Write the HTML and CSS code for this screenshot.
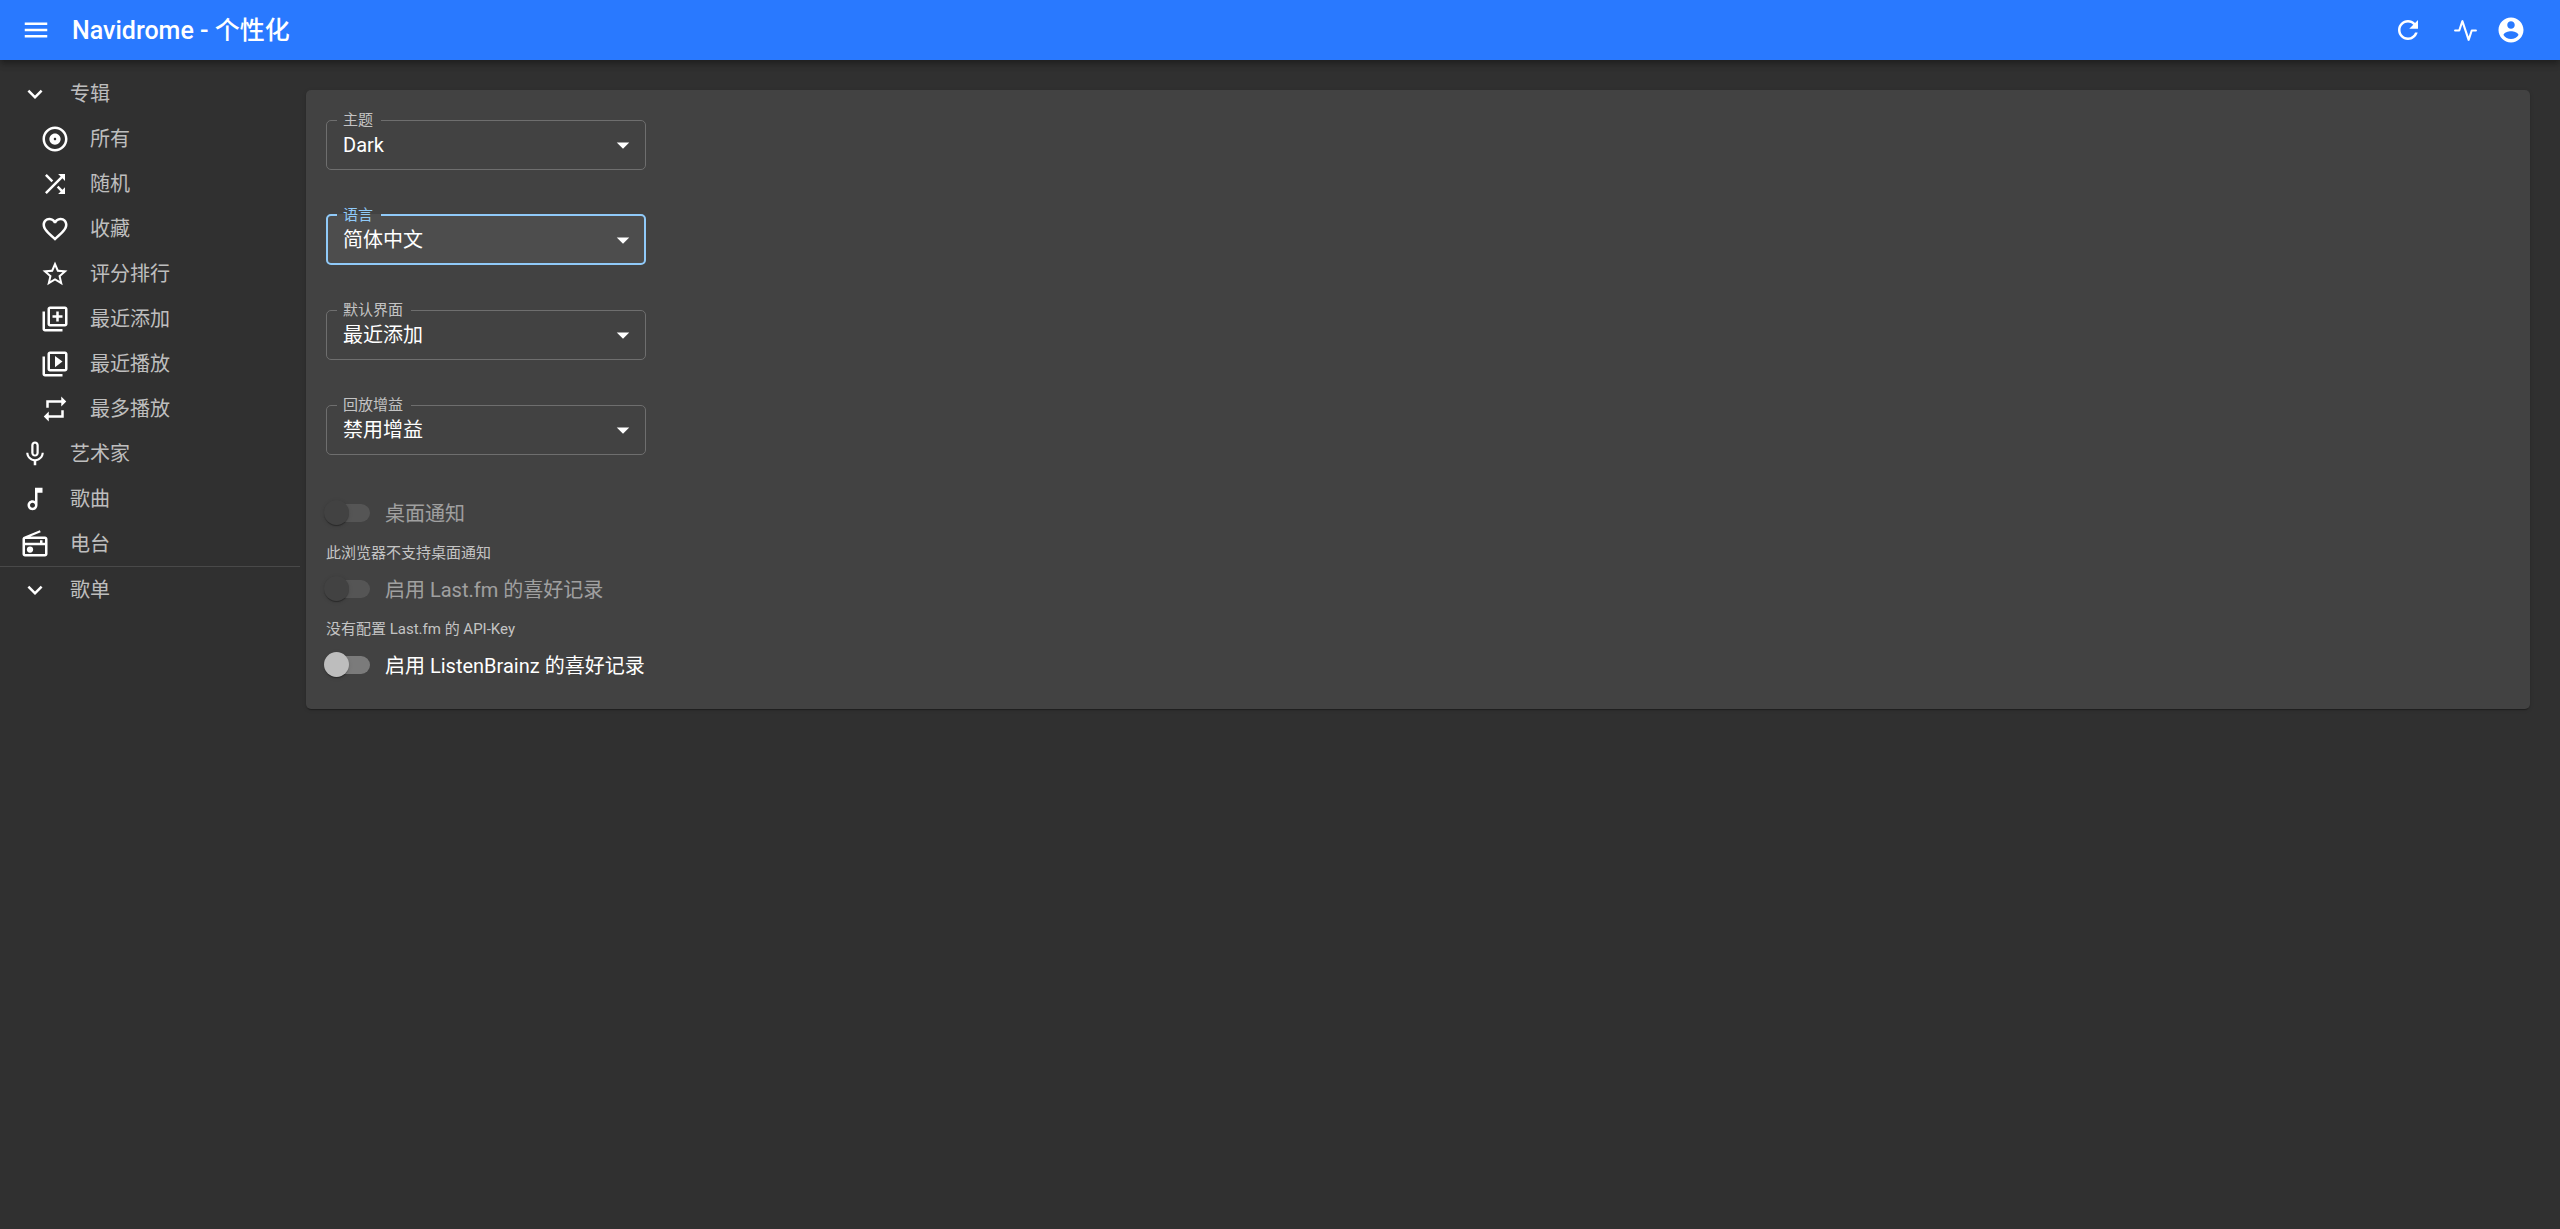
FILE: index.html
```html
<!DOCTYPE html>
<html lang="zh-CN">
<head>
<meta charset="utf-8">
<meta name="viewport" content="width=device-width, initial-scale=1">
<title>Navidrome - 个性化</title>
<link rel="stylesheet" href="styles.css">
</head>
<body>
<header class="appbar">
  <button class="icon-button" type="button" aria-label="菜单"><svg class="icon" viewBox="0 0 24 24"><path d="M3 18h18v-2H3v2zm0-5h18v-2H3v2zm0-7v2h18V6H3z"/></svg></button>
  <h1 class="title">Navidrome - 个性化</h1>
  <div class="actions">
    <button class="icon-button refresh" type="button" aria-label="刷新"><svg class="icon" viewBox="0 0 24 24"><path d="M17.65 6.35C16.2 4.9 14.21 4 12 4c-4.42 0-7.99 3.58-7.99 8s3.57 8 7.99 8c3.73 0 6.84-2.55 7.73-6h-2.08c-.82 2.33-3.04 4-5.65 4-3.31 0-6-2.69-6-6s2.69-6 6-6c1.66 0 3.14.69 4.22 1.78L13 11h7V4l-2.35 2.35z"/></svg></button>
    <button class="icon-button" type="button" aria-label="活动"><svg class="icon pulse" viewBox="0 0 24 24"><polyline points="22 12 18 12 15 21 9 3 6 12 2 12"/></svg></button>
    <button class="icon-button" type="button" aria-label="账户"><svg class="icon" viewBox="0 0 24 24"><path d="M12 2C6.48 2 2 6.48 2 12s4.48 10 10 10 10-4.48 10-10S17.52 2 12 2zm0 3c1.66 0 3 1.34 3 3s-1.34 3-3 3-3-1.34-3-3 1.34-3 3-3zm0 14.2c-2.5 0-4.71-1.28-6-3.22.03-1.99 4-3.08 6-3.08 1.99 0 5.97 1.09 6 3.08-1.29 1.94-3.5 3.22-6 3.22z"/></svg></button>
  </div>
</header>
<div class="layout">
  <nav class="sidebar">
    <button class="menu-item" type="button"><svg class="icon" viewBox="0 0 24 24"><path d="M7.41 8.59 12 13.17l4.59-4.58L18 10l-6 6-6-6 1.41-1.41z"/></svg>专辑</button>
    <a class="menu-item nested" href="#all"><svg class="icon" viewBox="0 0 24 24"><path d="M12 2C6.48 2 2 6.48 2 12s4.48 10 10 10 10-4.48 10-10S17.52 2 12 2zm0 18c-4.41 0-8-3.59-8-8s3.59-8 8-8 8 3.59 8 8-3.59 8-8 8zm0-12.5c-2.49 0-4.5 2.01-4.5 4.5s2.01 4.5 4.5 4.5 4.5-2.01 4.5-4.5-2.01-4.5-4.5-4.5zm0 5.5c-.55 0-1-.45-1-1s.45-1 1-1 1 .45 1 1-.45 1-1 1z"/></svg>所有</a>
    <a class="menu-item nested" href="#random"><svg class="icon" viewBox="0 0 24 24"><path d="M10.59 9.17 5.41 4 4 5.41l5.17 5.17 1.42-1.41zM14.5 4l2.04 2.04L4 18.59 5.41 20 17.96 7.46 20 9.5V4h-5.5zm.33 9.41-1.41 1.41 3.13 3.13L14.5 20H20v-5.5l-2.04 2.04-3.13-3.13z"/></svg>随机</a>
    <a class="menu-item nested" href="#starred"><svg class="icon" viewBox="0 0 24 24"><path d="M16.5 3c-1.74 0-3.41.81-4.5 2.09C10.91 3.81 9.24 3 7.5 3 4.42 3 2 5.42 2 8.5c0 3.78 3.4 6.86 8.55 11.54L12 21.35l1.45-1.32C18.6 15.36 22 12.28 22 8.5 22 5.42 19.58 3 16.5 3zm-4.4 15.55-.1.1-.1-.1C7.14 14.24 4 11.39 4 8.5 4 6.5 5.5 5 7.5 5c1.54 0 3.04.99 3.57 2.36h1.87C13.46 5.99 14.96 5 16.5 5c2 0 3.5 1.5 3.5 3.5 0 2.89-3.14 5.74-7.9 10.05z"/></svg>收藏</a>
    <a class="menu-item nested" href="#top-rated"><svg class="icon" viewBox="0 0 24 24"><path d="m22 9.24-7.19-.62L12 2 9.19 8.63 2 9.24l5.46 4.73L5.82 21 12 17.27 18.18 21l-1.63-7.03L22 9.24zM12 15.4l-3.76 2.27 1-4.28-3.32-2.88 4.38-.38L12 6.1l1.71 4.04 4.38.38-3.32 2.88 1 4.28L12 15.4z"/></svg>评分排行</a>
    <a class="menu-item nested" href="#recently-added"><svg class="icon" viewBox="0 0 24 24"><path d="M4 6H2v14c0 1.1.9 2 2 2h14v-2H4V6zm16-4H8c-1.1 0-2 .9-2 2v12c0 1.1.9 2 2 2h12c1.1 0 2-.9 2-2V4c0-1.1-.9-2-2-2zm0 14H8V4h12v12zm-7-2h2v-3h3V9h-3V6h-2v3h-3v2h3z"/></svg>最近添加</a>
    <a class="menu-item nested" href="#recently-played"><svg class="icon" viewBox="0 0 24 24"><path d="M4 6H2v14c0 1.1.9 2 2 2h14v-2H4V6zm16-4H8c-1.1 0-2 .9-2 2v12c0 1.1.9 2 2 2h12c1.1 0 2-.9 2-2V4c0-1.1-.9-2-2-2zm0 14H8V4h12v12zM12 5.5v9l6-4.5z"/></svg>最近播放</a>
    <a class="menu-item nested" href="#most-played"><svg class="icon" viewBox="0 0 24 24"><path d="M7 7h10v3l4-4-4-4v3H5v6h2V7zm10 10H7v-3l-4 4 4 4v-3h12v-6h-2v4z"/></svg>最多播放</a>
    <a class="menu-item" href="#artists"><svg class="icon" viewBox="0 0 24 24"><path d="M12 14c1.66 0 2.99-1.34 2.99-3L15 5c0-1.66-1.34-3-3-3S9 3.34 9 5v6c0 1.66 1.34 3 3 3zm-1.2-9.1c0-.66.54-1.2 1.2-1.2.66 0 1.2.54 1.2 1.2l-.01 6.2c0 .66-.53 1.2-1.19 1.2-.66 0-1.2-.54-1.2-1.2V4.9zm6.5 6.1c0 3-2.54 5.1-5.3 5.1S6.7 14 6.7 11H5c0 3.41 2.72 6.23 6 6.72V21h2v-3.28c3.28-.48 6-3.3 6-6.72h-1.7z"/></svg>艺术家</a>
    <a class="menu-item" href="#songs"><svg class="icon" viewBox="0 0 24 24"><path d="m12 3 .01 10.55c-.59-.34-1.27-.55-2-.55C7.79 13 6 14.79 6 17s1.79 4 4.01 4S14 19.21 14 17V7h4V3h-6zm-1.99 16c-1.1 0-2-.9-2-2s.9-2 2-2 2 .9 2 2-.9 2-2 2z"/></svg>歌曲</a>
    <a class="menu-item" href="#radios"><svg class="icon" viewBox="0 0 24 24"><path d="M3.24 6.15C2.51 6.43 2 7.17 2 8v12c0 1.1.89 2 2 2h16c1.11 0 2-.9 2-2V8c0-1.11-.89-2-2-2H8.3l8.26-3.34L15.88 1 3.24 6.15zM20 8v3h-2V9h-2v2H4V8h16zM4 20v-7h16v7H4z"/><circle cx="8" cy="16.48" r="2.5"/></svg>电台</a>
    <hr class="divider">
    <button class="menu-item" type="button"><svg class="icon" viewBox="0 0 24 24"><path d="M7.41 8.59 12 13.17l4.59-4.58L18 10l-6 6-6-6 1.41-1.41z"/></svg>歌单</button>
  </nav>
  <main class="content">
    <form class="card">
      <div class="fields">
        <fieldset class="field">
          <legend><label for="theme">主题</label></legend>
          <div class="control"><select id="theme"><option>Dark</option></select><svg class="icon caret" viewBox="0 0 24 24"><path d="m7 10 5 5 5-5z"/></svg></div>
        </fieldset>
        <fieldset class="field active">
          <legend><label for="language">语言</label></legend>
          <div class="control"><select id="language"><option>简体中文</option></select><svg class="icon caret" viewBox="0 0 24 24"><path d="m7 10 5 5 5-5z"/></svg></div>
        </fieldset>
        <fieldset class="field">
          <legend><label for="view">默认界面</label></legend>
          <div class="control"><select id="view"><option>最近添加</option></select><svg class="icon caret" viewBox="0 0 24 24"><path d="m7 10 5 5 5-5z"/></svg></div>
        </fieldset>
        <fieldset class="field">
          <legend><label for="gain">回放增益</label></legend>
          <div class="control"><select id="gain"><option>禁用增益</option></select><svg class="icon caret" viewBox="0 0 24 24"><path d="m7 10 5 5 5-5z"/></svg></div>
        </fieldset>
      </div>
      <div class="toggles">
        <div class="toggle"><input class="switch" type="checkbox" id="notify" disabled><label for="notify">桌面通知</label></div>
        <p class="helper">此浏览器不支持桌面通知</p>
        <div class="toggle"><input class="switch" type="checkbox" id="lastfm" disabled><label for="lastfm">启用 Last.fm 的喜好记录</label></div>
        <p class="helper">没有配置 Last.fm 的 API-Key</p>
        <div class="toggle"><input class="switch" type="checkbox" id="listenbrainz"><label for="listenbrainz">启用 ListenBrainz 的喜好记录</label></div>
      </div>
    </form>
  </main>
</div>
</body>
</html>
```
FILE: styles.css
```css
* {
  box-sizing: border-box;
}

body {
  margin: 0;
  min-height: 100vh;
  background: #303030;
  color: #fff;
  font: 20px/30px Roboto, "Noto Sans CJK SC", sans-serif;
}

button,
select {
  font: inherit;
  color: inherit;
  border: 0;
  background: none;
  padding: 0;
  margin: 0;
}

.icon {
  display: block;
  flex: none;
  width: 30px;
  height: 30px;
  fill: #fff;
}

/* Top bar */
.appbar {
  position: relative;
  display: flex;
  align-items: center;
  height: 60px;
  padding: 0 34px 0 21px;
  background: #2979ff;
  box-shadow: 0 3px 5px -1px rgba(0, 0, 0, .2), 0 5px 6px rgba(0, 0, 0, .14), 0 1px 12px rgba(0, 0, 0, .12);
}

.title {
  flex: 1;
  margin: 0 0 0 21px;
  padding-top: 2px;
  font-size: 25px;
  line-height: 40px;
  font-weight: 500;
}

.actions {
  display: flex;
  align-items: center;
  gap: 15px;
}

.refresh {
  margin-right: 12px;
}

.pulse {
  width: 25px;
  height: 25px;
  margin: 0 3px;
  fill: none;
  stroke: #fff;
  stroke-width: 2;
  stroke-linecap: round;
  stroke-linejoin: round;
}

/* Page body */
.layout {
  display: flex;
  align-items: flex-start;
}

.sidebar {
  flex: none;
  width: 300px;
  padding-top: 11px;
}

.menu-item {
  display: flex;
  align-items: center;
  gap: 20px;
  width: 100%;
  height: 45px;
  padding-left: 20px;
  color: rgba(255, 255, 255, .7);
  text-decoration: none;
}

.nested {
  padding-left: 40px;
}

.divider {
  height: 1px;
  margin: 0;
  border: 0;
  background: rgba(255, 255, 255, .12);
}

.content {
  flex: 1;
  padding: 30px 30px 30px 6px;
}

.card {
  padding: 20px;
  border-radius: 5px;
  background: #424242;
  box-shadow: 0 3px 1px -2px rgba(0, 0, 0, .2), 0 1px 1px rgba(0, 0, 0, .14), 0 1px 4px rgba(0, 0, 0, .12);
}

/* Outlined selects */
.fields {
  display: flex;
  flex-direction: column;
  gap: 35px;
  width: 320px;
}

.field {
  min-width: 0;
  height: 60px;
  margin: 0;
  padding: 0;
  border: 1px solid #6e6e6e;
  border-radius: 5px;
}

.field legend {
  margin-left: 10px;
  padding: 0 8px 0 6px;
  font-size: 15px;
  line-height: 20px;
  color: rgba(255, 255, 255, .7);
}

.field label {
  display: block;
}

.control {
  display: grid;
  grid-template-columns: 1fr 30px;
  align-items: center;
  height: 30px;
  padding-right: 7px;
}

.control select {
  grid-area: 1 / 1 / 2 / 3;
  height: 30px;
  padding: 0 0 2px 16px;
  appearance: none;
  outline: 0;
}

.control option {
  background: #424242;
}

.caret {
  grid-area: 1 / 2;
  pointer-events: none;
}

.active {
  border: 2px solid #90caf9;
  background: #4d4d4d;
}

.active legend {
  margin-left: 9px;
  color: #90caf9;
}

.active .control {
  padding-right: 6px;
}

.active select {
  padding-left: 15px;
}

/* Switches */
.toggles {
  margin-top: 34px;
}

.toggle {
  display: flex;
  align-items: center;
  gap: 15px;
  height: 48px;
}

.toggle label {
  padding-top: 2px;
}

.switch {
  position: relative;
  flex: none;
  width: 44px;
  height: 18px;
  margin: 0;
  border-radius: 9px;
  background: #7b7b7b;
  appearance: none;
}

.switch::before {
  content: "";
  position: absolute;
  top: -4px;
  left: -2px;
  width: 25px;
  height: 25px;
  border-radius: 50%;
  background: #bdbdbd;
  box-shadow: 0 2px 1px -1px rgba(0, 0, 0, .2), 0 1px 1px rgba(0, 0, 0, .14), 0 1px 4px rgba(0, 0, 0, .12);
}

.switch:disabled {
  background: #555;
}

.switch:disabled::before {
  background: #424242;
}

.switch:disabled + label {
  color: rgba(255, 255, 255, .5);
}

.helper {
  margin: 4px 0 0;
  font-size: 15px;
  line-height: 24px;
  color: rgba(255, 255, 255, .7);
}
```
